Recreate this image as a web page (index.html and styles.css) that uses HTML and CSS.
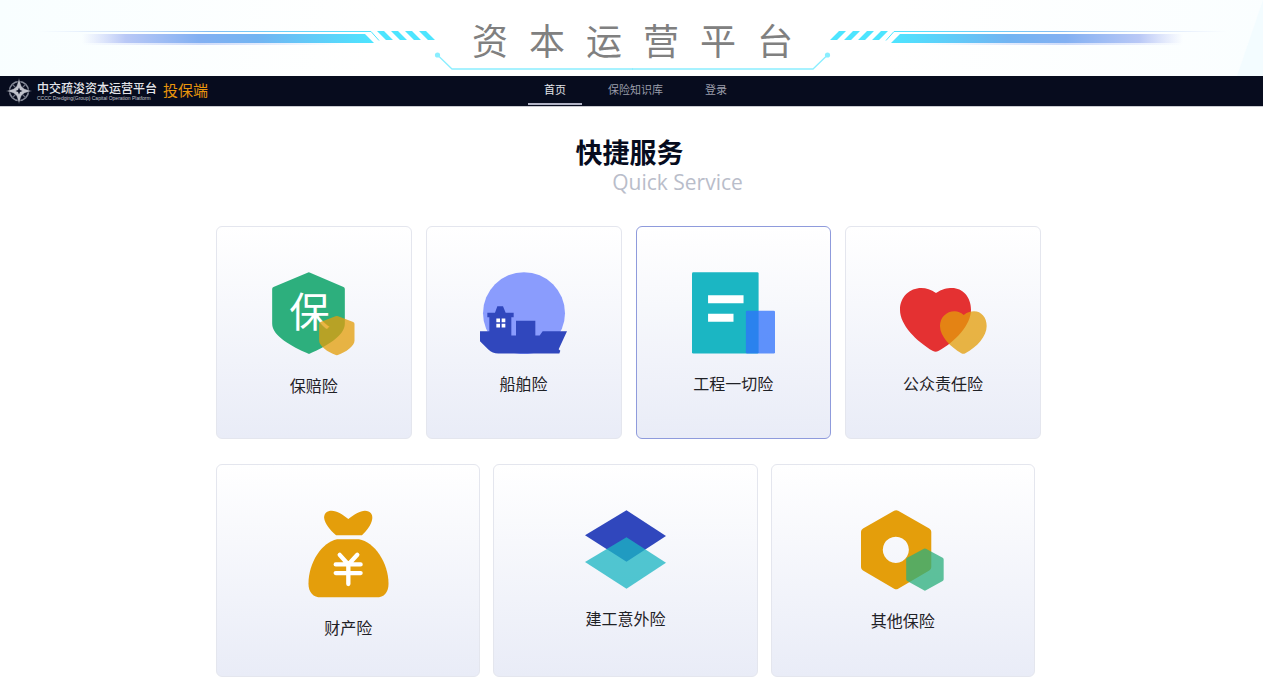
FILE: index.html
```
<!DOCTYPE html>
<html lang="zh-CN">
<head>
    <meta charset="UTF-8">
    <title>资本运营平台</title>
    <link rel="stylesheet" href="styles.css">
</head>
<body>
    <!-- 顶部标题 -->
    <header class="banner">
        <svg class="banner-bg" viewBox="0 0 1263 76" preserveAspectRatio="xMidYMid slice" aria-hidden="true">
            <defs>
                <linearGradient id="bar" x1="0" x2="1" y1="0" y2="0">
                    <stop offset="0" stop-color="#c5cdf8" stop-opacity="0"/>
                    <stop offset="0.15" stop-color="#b9c8f6"/>
                    <stop offset="0.4" stop-color="#83b0f2"/>
                    <stop offset="0.6" stop-color="#72b4f2"/>
                    <stop offset="1" stop-color="#4de5ff"/>
                </linearGradient>
                <linearGradient id="shade" x1="0" x2="1" y1="0" y2="0">
                    <stop offset="0" stop-color="#cdd6f8" stop-opacity="0"/>
                    <stop offset="0.45" stop-color="#cfdcfa"/>
                    <stop offset="1" stop-color="#cfdcfa" stop-opacity="0"/>
                </linearGradient>
                <linearGradient id="thin" gradientUnits="userSpaceOnUse" x1="38" x2="379" y1="0" y2="0">
                    <stop offset="0" stop-color="#b9c8f6" stop-opacity="0"/>
                    <stop offset="0.5" stop-color="#83bdf2"/>
                    <stop offset="1" stop-color="#4de5ff"/>
                </linearGradient>
                <g id="wing">
                    <path d="M38 31.500H371L379 40.500" fill="none" stroke="url(#thin)"/>
                    <path d="M82 34H365L374 43H82z" fill="url(#bar)"/>
                    <path d="M82 43H345V45H82z" fill="url(#shade)"/>
                    <path d="M377 31h7l9 9h-7zM391 31h7l9 9h-7zM405 31h7l9 9h-7zM419 31h7l9 9h-7z" fill="#4de5ff"/>
                    <circle cx="437.500" cy="55" r="2.600" fill="#8aeeff"/>
                    <path d="M438 55.500L452 69H633" fill="none" stroke="#8aeeff" stroke-width="1.300"/>
                </g>
            </defs>
            <path d="M1263 0V76H1237z" fill="#f3fcff"/>
            <use href="#wing"/>
            <use href="#wing" transform="translate(1265 0) scale(-1 1)"/>
        </svg>
        <h1 class="banner-title">
            <span>资</span><span>本</span><span>运</span><span>营</span><span>平</span><span>台</span>
        </h1>
    </header>

    <!-- 导航 -->
    <div class="navbar">
        <a class="brand" href="#">
            <svg class="brand-logo" viewBox="0 0 26 26" aria-hidden="true">
                <circle cx="13" cy="13" r="9.500" fill="none" stroke="#858997" stroke-width="1.600"/>
                <path d="M6 6L20 20M20 6L6 20" stroke="#6f7382" stroke-width="1.200"/>
                <path d="M13 0L15.500 8Q17 9.500 18 10.500L26 13L18 15.500Q16.500 17 15.500 18L13 26L10.500 18Q9 16.500 8 15.500L0 13L8 10.500Q9.500 9 10.500 8z" fill="#c0c2cb" stroke="#070c1e" stroke-width="0.600"/>
                <path d="M13 9.500L14 12L16.500 13L14 14L13 16.500L12 14L9.500 13L12 12z" fill="#070c1e"/>
            </svg>
            <span class="brand-text">
                <span class="brand-cn">中交疏浚资本运营平台</span>
                <span class="brand-en">CCCC Dredging(Group) Capital Operation Platform</span>
            </span>
            <span class="brand-end">投保端</span>
        </a>
        <nav class="menu">
            <a class="menu-item active" href="#">首页</a>
            <a class="menu-item" href="#">保险知识库</a>
            <a class="menu-item" href="#">登录</a>
        </nav>
    </div>

    <!-- 快捷服务 -->
    <main class="container">
        <div class="heading">
            <h2>快捷服务</h2>
            <p>Quick Service</p>
        </div>

        <div class="row row-four">
            <a class="card" href="#">
                <svg width="83" height="84" viewBox="203 170 248 252" aria-hidden="true">
                    <path d="M309 172q4-2 8 0L417 215q4 2 4 6V325C421 362 362 394 318 414q-5 3-9 0C264 394 203 362 203 325V221q0-4 4-6z" fill="#2daf7d"/>
                    <text class="shield-text" x="315" y="334" text-anchor="middle">保</text>
                    <path d="M393 303q4-2 8 0L446 320q4 2 4 6V376C450 392 424 410 400 419q-3 1-6 0C370 410 344 392 344 376V326q0-4 4-6z" fill="#e49e0b" fill-opacity="0.760"/>
                </svg>
                <span class="card-name">保赔险</span>
            </a>
            <a class="card" href="#">
                <svg width="87" height="82" viewBox="180 170 261 245" aria-hidden="true">
                    <circle cx="312" cy="293" r="123" fill="#8a9cfd"/>
                    <path d="M180 347H208V305H202V292H225L232 272H249L257 292H281V305H274V360H288V316H346V360H359L368 347H441L416 401L421 406L418 414H235Q217 414 205 402L180 377z" fill="#3047bd"/>
                    <path d="M229 309h11v11h-11zM245 309h11v11h-11zM229 325h11v11h-11zM245 325h11v11h-11z" fill="#fff"/>
                </svg>
                <span class="card-name">船舶险</span>
            </a>
            <a class="card selected" href="#">
                <svg width="83" height="82" viewBox="185 171 248 244" aria-hidden="true">
                    <rect x="185" y="171" width="199" height="243" rx="4" fill="#1bb6c3"/>
                    <path d="M233 240h106v24H233zM233 295h76v24h-76z" fill="#fff"/>
                    <rect x="346" y="286" width="87" height="128" rx="4" fill="#2f71fb" fill-opacity="0.760"/>
                </svg>
                <span class="card-name">工程一切险</span>
            </a>
            <a class="card" href="#">
                <svg width="87" height="82" viewBox="177 171 261 246" aria-hidden="true">
                    <path d="M285 234C303 222 317 219 333 219C365 219 390 246 390 284C390 330 342 381 292 408Q284 412 276 408C226 378 177 330 177 284C177 246 206 219 241 219C256 219 270 224 285 234z" fill="#e43132"/>
                    <path d="M368 300C380 291 390 289 399 289C421 289 437 308 437 333C437 364 408 396 373 415Q367 418 361 415C329 396 297 364 297 333C297 308 316 289 341 289C351 289 359 293 368 300z" fill="#e49e0b" fill-opacity="0.760"/>
                </svg>
                <span class="card-name">公众责任险</span>
            </a>
        </div>

        <div class="row row-three">
            <a class="card" href="#">
                <svg width="81" height="88" viewBox="293 164 243 265" aria-hidden="true">
                    <path d="M414 191C430 178 450 166 464 166C481 166 488 177 486 191C483 210 469 226 455 240H377C359 224 343 205 341 187C341 174 350 166 364 166C380 166 398 178 414 191z" fill="#e49e0b"/>
                    <path d="M380 252H446C492 259 535 323 535 385C535 412 522 427 498 427H332C308 427 294 412 294 385C294 323 334 261 380 252z" fill="#e49e0b"/>
                    <path d="M388 299L414 328L441 299M376 328H451M376 354H451M414 328V387" fill="none" stroke="#fff" stroke-width="13" stroke-linecap="round" stroke-linejoin="round"/>
                </svg>
                <span class="card-name">财产险</span>
            </a>
            <a class="card" href="#">
                <svg width="81" height="79" viewBox="285 166 244 236" aria-hidden="true">
                    <path d="M410 166L529 243L410 321L285 241z" fill="#3047bd"/>
                    <path d="M410 247L529 324L410 402L285 322z" fill="#1bb6c3" fill-opacity="0.760"/>
                </svg>
                <span class="card-name">建工意外险</span>
            </a>
            <a class="card" href="#">
                <svg width="83" height="81" viewBox="290 166 248 242" aria-hidden="true">
                    <path fill-rule="evenodd" d="M389 168q6-3 12 0L494 221q6 4 6 10V337q0 6-6 10L401 401q-6 3-12 0L296 347q-6-4-6-10V231q0-6 6-10zM394 246a39 39 0 1 0 0.100 0z" fill="#e49e0b"/>
                    <path d="M478 282q3-2 6 0L534 309q3 2 3 5V373q0 3-3 5L484 406q-3 2-6 0L428 378q-3-2-3-5V314q0-3 3-5z" fill="#2daf7d" fill-opacity="0.760"/>
                </svg>
                <span class="card-name">其他保险</span>
            </a>
        </div>
    </main>
</body>
</html>
```

FILE: styles.css
```
* {
    box-sizing: border-box;
}

body {
    margin: 0;
    font-family: "Noto Sans CJK SC", "Open Sans", sans-serif;
    background-color: #fff;
    color: #1f2126;
}

a {
    color: inherit;
    text-decoration: none;
}

h1, h2, p {
    margin: 0;
}

/* 顶部标题 */
.banner {
    display: grid;
    height: 76px;
    background: linear-gradient(100deg, #f8feff 0%, #fff 30%, #fff 70%, #fafeff 100%);
}

.banner-bg, .banner-title {
    grid-area: 1 / 1;
}

.banner-bg {
    width: 100%;
    height: 76px;
}

.banner-title {
    display: flex;
    justify-content: center;
    gap: 21px;
    padding-left: 2px;
    line-height: 78px;
    height: 76px;
    font-size: 36px;
    font-weight: 400;
    color: #808080;
}

/* 导航 */
.navbar {
    display: grid;
    grid-template-columns: 1fr auto 1fr;
    height: 31px;
    background-color: #070c1e;
    border-bottom: 1px solid #c9cad0;
}

.brand {
    display: flex;
    align-items: center;
    padding-left: 6px;
}

.brand-logo {
    width: 26px;
    height: 26px;
    margin-right: 5px;
}

.brand-text {
    display: flex;
    flex-direction: column;
    white-space: nowrap;
}

.brand-cn {
    font-size: 12px;
    font-weight: 500;
    line-height: 14px;
    color: #e4e5ea;
}

.brand-en {
    font-family: "Liberation Sans", Arial, sans-serif;
    font-size: 5px;
    line-height: 6px;
    color: #c3c5ce;
}

.brand-end {
    margin-left: 6px;
    font-size: 15px;
    line-height: 28px;
    height: 30px;
    color: #e8950c;
}

.menu {
    display: flex;
    gap: 10px;
    padding-left: 8px;
}

.menu-item {
    padding: 0 16px;
    font-size: 11px;
    line-height: 26px;
    color: #9a9daa;
    border-bottom: 2px solid transparent;
    height: 29px;
}

.menu-item.active {
    color: #e4e5ea;
    border-bottom-color: #b1b3c5;
}

/* 快捷服务 */
.container {
    max-width: 831px;
    margin: 0 auto;
}

.heading {
    padding: 29px 4px 30px 0;
    text-align: center;
}

.heading h2 {
    font-size: 27px;
    line-height: 32px;
    color: #070c1e;
}

.heading p {
    padding-left: 96px;
    font-family: "Open Sans", sans-serif;
    font-size: 21px;
    line-height: 28px;
    color: #b9bdca;
}

.row {
    display: grid;
}

.row-four {
    grid-template-columns: repeat(4, 1fr);
    gap: 14px;
    margin-right: 6px;
    margin-bottom: 25px;
}

.row-three {
    grid-template-columns: repeat(3, 1fr);
    gap: 13px;
    margin-right: 12px;
}

.card {
    display: flex;
    flex-direction: column;
    align-items: center;
    min-height: 213px;
    padding: 45px 10px 10px;
    border: 1px solid #e4e6ee;
    border-radius: 6px;
    background: linear-gradient(#fff, #e9ecf7);
}

.card:hover, .card.selected {
    border-color: #8f9bdc;
}

.card-name {
    margin-top: 17px;
    font-size: 16px;
    line-height: 24px;
}

.shield-text {
    font-size: 122px;
    fill: #fff;
}
```
